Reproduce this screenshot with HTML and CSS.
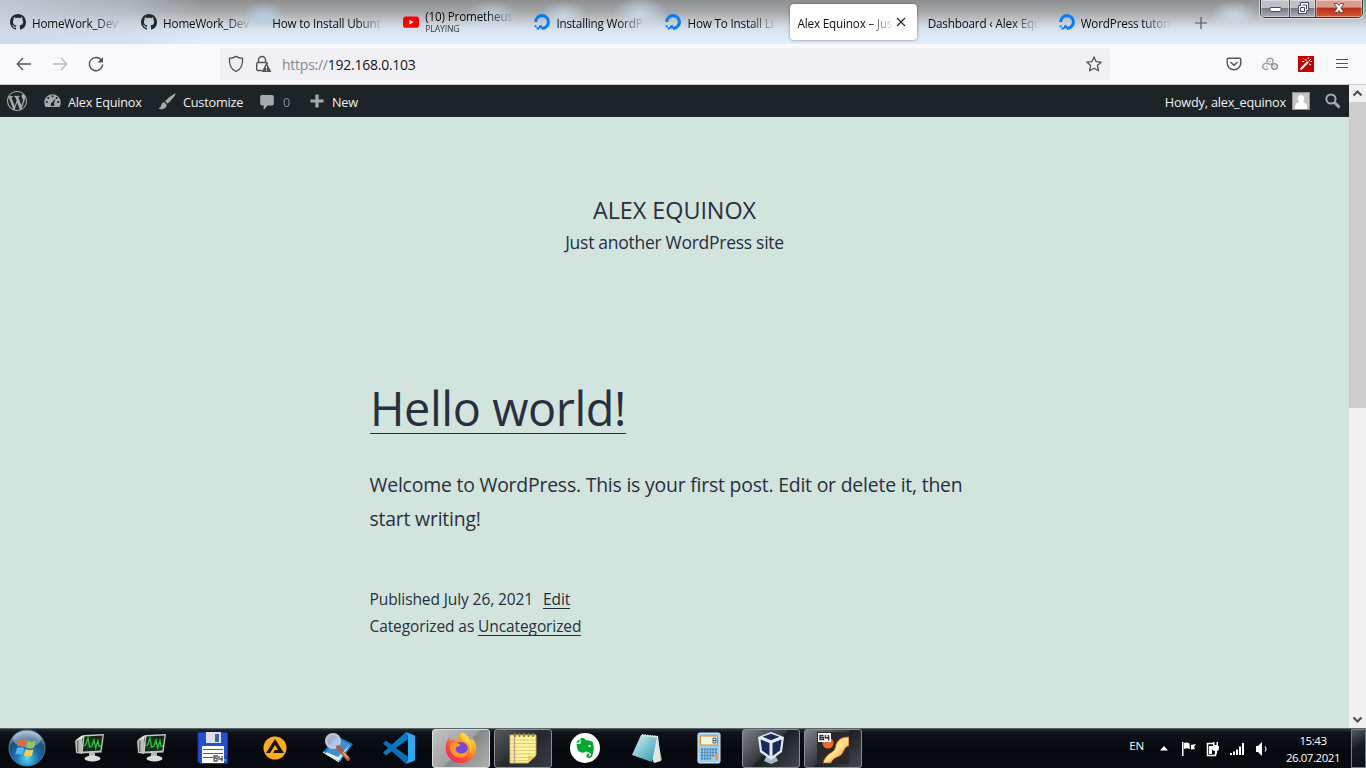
FILE: index.html
```html
<!DOCTYPE html>
<html lang="en">
<head>
<meta charset="utf-8">
<title>Alex Equinox – Just another WordPress site</title>
<link rel="stylesheet" href="styles.css">
</head>
<body>
<svg class="defs" width="0" height="0" aria-hidden="true">
  <defs>
    <symbol id="github" viewBox="0 0 16 16"><path fill="#24292e" fill-rule="evenodd" d="M8 0C3.58 0 0 3.58 0 8c0 3.54 2.29 6.53 5.47 7.59.4.07.55-.17.55-.38 0-.19-.01-.82-.01-1.49-2.01.37-2.53-.49-2.69-.94-.09-.23-.48-.94-.82-1.13-.28-.15-.68-.52-.01-.53.63-.01 1.08.58 1.23.82.72 1.21 1.87.87 2.33.66.07-.52.28-.87.51-1.07-1.78-.2-3.64-.89-3.64-3.95 0-.87.31-1.59.82-2.15-.08-.2-.36-1.02.08-2.12 0 0 .67-.21 2.2.82.64-.18 1.32-.27 2-.27s1.36.09 2 .27c1.53-1.04 2.2-.82 2.2-.82.44 1.1.16 1.92.08 2.12.51.56.82 1.27.82 2.15 0 3.07-1.87 3.75-3.65 3.95.29.25.54.73.54 1.48 0 1.07-.01 1.93-.01 2.2 0 .21.15.46.55.38A8.01 8.01 0 0 0 16 8c0-4.42-3.58-8-8-8z"/></symbol>
    <symbol id="ocean" viewBox="0 0 16 16"><path fill="none" stroke="#0080ff" stroke-width="3.1" d="M1.6 8A6.4 6.4 0 1 1 8 14.4"/><path fill="#0080ff" d="M5 11.2h3.1V16H8v-1.6H5zM2.6 13.2H5v2.4H2.6zM.6 11.2h2v2h-2z"/></symbol>
    <symbol id="monitor" viewBox="0 0 32 32"><path fill="#b9bcb7" d="M2 9l7-4v17l-6-1z"/><path fill="#6f746f" d="M4 9l1.500-1v12L4 20z"/><path fill="#e3e5e0" d="M2 8.500L8 4l3-1-2 4z"/><path fill="#c6c9c3" d="M10 3l21-1-2.500 18.500L8 21.500z"/><path fill="#11251a" d="M11.500 4.500L29.500 3.500 27.300 18.500 9.800 19.500z"/><path fill="none" stroke="#1f5c2e" stroke-width=".5" d="M11 8l18-.6M10.500 12l18-.6M10 16l17.800-.6M15.500 4.500l-1.500 15M20 4l-1.500 15M25 4l-1.500 15"/><path fill="none" stroke="#27c73c" stroke-width="1.300" d="M10.500 14l2-1 2.500-7 1.500 9 2.500-1 2-6 1.500 8 2.500-7 1 5h2"/><path fill="#b3b7b2" d="M16 21h6v5h-6z"/><ellipse cx="19.500" cy="26.500" rx="8" ry="3" fill="#d9dcd9"/></symbol>
    <linearGradient id="flame" x1="1" y1="0" x2=".1" y2="1"><stop offset="0" stop-color="#fff44f"/><stop offset=".35" stop-color="#ffa51f"/><stop offset=".7" stop-color="#ff453c"/><stop offset="1" stop-color="#e91e78"/></linearGradient>
    <radialGradient id="orb" cx=".5" cy=".8" r=".75"><stop offset="0" stop-color="#55d8f5"/><stop offset=".4" stop-color="#1674b4"/><stop offset=".75" stop-color="#1c4a78"/><stop offset="1" stop-color="#8dabc2"/></radialGradient>
    <linearGradient id="pad" x1="0" y1="0" x2="1" y2="1"><stop offset="0" stop-color="#d8f3f5"/><stop offset="1" stop-color="#2c98b0"/></linearGradient>
    <linearGradient id="lava" x1="0" y1="0" x2="1" y2="1"><stop offset="0" stop-color="#ff8b25"/><stop offset=".5" stop-color="#ffe592"/><stop offset="1" stop-color="#ff7418"/></linearGradient>
  </defs>
</svg>

<header class="titlebar">
  <div class="tabs">
    <div class="tab"><svg class="favicon"><use href="#github"/></svg><span class="label">HomeWork_Dev</span></div>
    <div class="tab"><svg class="favicon"><use href="#github"/></svg><span class="label">HomeWork_Dev</span></div>
    <div class="tab"><span class="label">How to Install Ubunt</span></div>
    <div class="tab"><svg class="favicon" viewBox="0 0 16 16"><rect y="2.5" width="16" height="11.2" rx="2.8" fill="#f00"/><path d="M6.4 5.7v4.8l4.2-2.4z" fill="#fff"/></svg><span class="label stacked"><span>(10) Prometheus</span><small>PLAYING</small></span></div>
    <div class="tab"><svg class="favicon"><use href="#ocean"/></svg><span class="label">Installing WordP</span></div>
    <div class="tab"><svg class="favicon"><use href="#ocean"/></svg><span class="label">How To Install Li</span></div>
    <div class="tab active"><span class="label">Alex Equinox – Jus</span><svg class="close" viewBox="0 0 10 10"><path d="M1 1l8 8M9 1L1 9" stroke="#222" stroke-width="1.1"/></svg></div>
    <div class="tab"><span class="label">Dashboard ‹ Alex Equ</span></div>
    <div class="tab"><svg class="favicon"><use href="#ocean"/></svg><span class="label">WordPress tutori</span></div>
    <svg class="newtab" viewBox="0 0 12 12"><path d="M6 0v12M0 6h12" stroke="#55565c" stroke-width="1.2"/></svg>
  </div>
  <div class="winbuttons">
    <span class="winbtn"><svg width="14" height="12" viewBox="0 0 14 12"><rect x="2" y="5.5" width="11" height="4" rx=".5" fill="#fff" stroke="#444a5c"/></svg></span>
    <span class="winbtn mid"><svg width="14" height="12" viewBox="0 0 14 12"><path d="M4.500.500h8v8h-2v3h-8v-8h2z" fill="#fff" stroke="#444a5c"/><path d="M4.500 5.500h4v4h-4zM6.500 3h4v4" fill="none" stroke="#444a5c"/></svg></span>
    <span class="winbtn quit"><svg width="14" height="12" viewBox="0 0 14 12"><path d="M2 1.500h3.300L7 3.600l1.700-2.100H12L8.800 6l3.200 4.500H8.700L7 8.400l-1.700 2.100H2L5.200 6z" fill="#fff" stroke="#5b3038" stroke-width=".8"/></svg></span>
  </div>
</header>

<nav class="toolbar">
  <svg class="nav-icon" viewBox="0 0 16 16"><path d="M15 8H1.500M7 2L1.300 8 7 14" fill="none" stroke="#53535d" stroke-width="1.300"/></svg>
  <svg class="nav-icon forward" viewBox="0 0 16 16"><path d="M1 8h13.500M9 2l5.700 6L9 14" fill="none" stroke="#b9b9be" stroke-width="1.300"/></svg>
  <svg class="nav-icon" viewBox="0 0 16 16"><path d="M13.600 4.600A6.600 6.600 0 1 0 14.600 8.500" fill="none" stroke="#53535d" stroke-width="1.400"/><path d="M15 1v5.500H9.500z" fill="#53535d"/></svg>
  <div class="urlbar">
    <svg width="16" height="18" viewBox="0 0 16 18"><path d="M8 1.400C10 2.800 12.300 3.300 14.600 3.400 14.800 9.500 13 14.500 8 16.400 3 14.500 1.200 9.500 1.400 3.400 3.700 3.300 6 2.800 8 1.400z" fill="none" stroke="#53535d" stroke-width="1.300"/></svg>
    <svg class="lock" width="17" height="18" viewBox="0 0 17 18"><path d="M3.500 7.500V5a3.500 3.500 0 0 1 7 0v2.500M7 15.500H3A1.200 1.200 0 0 1 1.700 14.300V8.700A1.200 1.200 0 0 1 3 7.500h8.500l1.300 1.300" fill="none" stroke="#53535d" stroke-width="1.400"/><path d="M11.500 7.600L16.400 17H6.600z" fill="#53535d"/><path d="M11.500 11v2.700M11.500 14.700v1.100" stroke="#f0f0f4" stroke-width="1.100"/></svg>
    <span class="url"><span class="scheme">https://</span>192.168.0.103</span>
    <svg class="star" width="16" height="16" viewBox="0 0 16 16"><path d="M8 .9l2.100 4.700 5.100.5-3.800 3.500 1.100 5.200L8 12.200l-4.500 2.600 1.100-5.200L.8 6.100l5.100-.5z" fill="none" stroke="#53535d" stroke-width="1.300" stroke-linejoin="round"/></svg>
  </div>
  <div class="extras">
    <svg width="16" height="16" viewBox="0 0 16 16"><path d="M2.500 2.200h11a1.300 1.300 0 0 1 1.300 1.300V7a6.800 6.800 0 0 1-13.600 0V3.500a1.300 1.300 0 0 1 1.300-1.300zM4.500 6L8 9.300 11.500 6" fill="none" stroke="#53535d" stroke-width="1.400"/></svg>
    <svg width="16" height="16" viewBox="0 0 16 16" fill="none" stroke="#a3a3a8" stroke-width="1.500"><circle cx="8" cy="5.200" r="3"/><path d="M6 12.500A3 3 0 1 1 5.500 8"/><circle cx="12.500" cy="10.500" r="2.800" stroke="#8e8e93"/><path d="M4 10.500h1M12.500 10v1M8 5v1M9 8.500l1 1"/></svg>
    <svg width="16" height="16" viewBox="0 0 16 16"><path fill="#c60000" d="M0 0h16v16H0z"/><path d="M2.500 13.500L10 6" stroke="#fff" stroke-width="2.200"/><path d="M10.500 5.500L13 3M8 3V5M5.500 2.500l1 1M4 5.500h2M11 8l2 1M12.500 5.500h1.500M10.500 1.500l-.5 1.500" stroke="#fff" stroke-width="1"/></svg>
    <svg width="12" height="16" viewBox="0 0 12 16"><path d="M0 3.500h12M0 7.500h12M0 11.500h12" stroke="#53535d" stroke-width="1.200"/></svg>
  </div>
</nav>

<div class="viewport">
  <div class="site">
    <div class="adminbar">
      <svg class="ab-wp" viewBox="0 0 20 20"><path fill="#a7aaad" d="M20 10c0-5.510-4.490-10-10-10C4.480 0 0 4.490 0 10c0 5.520 4.480 10 10 10 5.510 0 10-4.480 10-10zM7.780 15.370L4.370 6.220c.55-.02 1.170-.08 1.170-.08.5-.06.44-1.130-.06-1.110 0 0-1.450.11-2.370.11-.18 0-.37 0-.58-.01C4.120 2.690 6.870 1.110 10 1.110c2.330 0 4.450.87 6.050 2.340-.68-.11-1.650.39-1.650 1.580 0 .74.45 1.360.9 2.100.35.61.55 1.360.55 2.460 0 1.490-1.400 5-1.400 5l-3.030-8.370c.54-.02.82-.17.82-.17.5-.05.44-1.250-.06-1.220 0 0-1.440.12-2.380.12-.87 0-2.330-.12-2.330-.12-.5-.03-.56 1.200-.06 1.220l.92.08 1.260 3.410zM17.410 10c.24-.64.74-1.870.43-4.250.7 1.290 1.050 2.710 1.050 4.250 0 3.290-1.730 6.240-4.400 7.780.97-2.590 1.940-5.200 2.920-7.780zM6.100 18.090C3.120 16.650 1.110 13.530 1.110 10c0-1.300.23-2.480.72-3.590C3.250 10.300 4.670 14.200 6.100 18.090zm4.030-6.630l2.580 6.980c-.86.29-1.760.45-2.710.45-.79 0-1.570-.11-2.290-.33.81-2.380 1.620-4.740 2.420-7.100z"/></svg>
      <span class="ab-item ab-site"><svg width="17" height="16" viewBox="0 0 17 16"><path fill="#a7aaad" d="M1.600 14A8.200 8.200 0 1 1 15.400 14z"/><g fill="#1d2327"><circle cx="8.500" cy="3.300" r="1.100"/><circle cx="4.300" cy="5" r="1.100"/><circle cx="2.800" cy="9" r="1.100"/><circle cx="14.200" cy="9" r="1.100"/><circle cx="12.700" cy="5" r="1.100"/><path d="M11.500 5.200l-1.400 5.200a1.800 1.800 0 1 1-2-.8z"/></g></svg><b>Alex Equinox</b></span>
      <span class="ab-item ab-custom"><svg width="18" height="17" viewBox="0 0 18 17"><path fill="#a7aaad" d="M17.500.5C16 .2 9 6 7 8.300l2.500 2.500C12 8.500 18 2.500 17.500.5zM6.200 9.200c-2 0-2.700 1.400-3 3C2.800 14 2 14.500.5 15.500c3 1.500 8 .5 8.200-3.800z"/></svg><b>Customize</b></span>
      <span class="ab-item ab-comments"><svg width="14" height="16" viewBox="0 0 14 16"><path fill="#a7aaad" d="M2 0h10a1.800 1.800 0 0 1 1.800 1.800v7A1.800 1.800 0 0 1 12 10.500H7.500L3.700 15v-4.500H2A1.800 1.800 0 0 1 .2 8.800v-7A1.800 1.800 0 0 1 2 0z"/></svg><b class="dim">0</b></span>
      <span class="ab-item ab-new"><svg width="14" height="14" viewBox="0 0 14 14"><path d="M7 .5v13M.5 7h13" stroke="#a7aaad" stroke-width="3.200"/></svg><b>New</b></span>
      <span class="ab-item ab-user"><b>Howdy, alex_equinox</b><svg width="18" height="18" viewBox="0 0 18 18"><path fill="#8c8f94" d="M0 0h18v18H0z"/><path fill="#c3c3c3" d="M1 1h16v16H1z"/><path fill="#fff" d="M9 3a3.300 3.500 0 0 1 2 6.300c0 1.500 3.700 1.700 4 4.700v3H3v-3c.3-3 4-3.200 4-4.700A3.300 3.500 0 0 1 9 3z"/></svg></span>
      <svg class="ab-search" viewBox="0 0 16 16"><circle cx="6" cy="6" r="4.600" fill="none" stroke="#a7aaad" stroke-width="2"/><path d="M9.500 9.500l5 5" stroke="#a7aaad" stroke-width="2.800"/></svg>
    </div>
    <div class="masthead">
      <h1 class="site-title">ALEX EQUINOX</h1>
      <p class="tagline">Just another WordPress site</p>
    </div>
    <article class="post">
      <h2 class="post-title"><a href="#">Hello world!</a></h2>
      <p class="post-body">Welcome to WordPress. This is your first post. Edit or delete it, then<br>start writing!</p>
      <footer class="post-meta">
        <div><span>Published July 26, 2021</span><a class="edit" href="#">Edit</a></div>
        <div><span>Categorized as </span><a href="#">Uncategorized</a></div>
      </footer>
    </article>
  </div>
  <div class="scrollbar">
    <svg viewBox="0 0 17 17"><path d="M4.500 10.500l4-4 4 4" fill="none" stroke="#505050" stroke-width="2.200"/></svg>
    <div class="thumb"></div>
    <svg viewBox="0 0 17 17"><path d="M4.500 6.500l4 4 4-4" fill="none" stroke="#505050" stroke-width="2.200"/></svg>
  </div>
</div>

<footer class="taskbar">
  <div class="start"><svg width="38" height="38" viewBox="0 0 38 38"><circle cx="19" cy="19" r="18" fill="url(#orb)" stroke="#567993"/><ellipse cx="19" cy="10" rx="14" ry="8" fill="#dce9f3" opacity=".4"/><path fill="#ee6732" d="M11 11c2.500-1.500 5-1.300 7.500.2L16.700 18c-2.600-1.400-4.900-1.500-7.500-.3z"/><path fill="#95c94a" d="M19.800 12c2.600 1.300 5 1.200 8-.4L26 18.500c-2.700 1.400-5.200 1.300-8 0z"/><path fill="#52b7ea" d="M8.900 19.200c2.500-1.300 5-1.200 7.500.3L14.600 26c-2.500-1.400-4.800-1.400-7.400-.2z"/><path fill="#fdce45" d="M17.600 20.200c2.600 1.300 5.200 1.300 8 0l-1.800 6.600c-2.700 1.400-5.200 1.300-8 0z"/></svg></div>
  <div class="task"><svg viewBox="0 0 32 32"><use href="#monitor"/></svg></div>
  <div class="task"><svg viewBox="0 0 32 32"><use href="#monitor"/></svg></div>
  <div class="task"><svg viewBox="0 0 32 32"><path fill="#2450cf" stroke="#15349b" d="M1 .5h29.500v31H3l-2-2z"/><path fill="#dce0e6" d="M9 0h15v11H9z"/><path fill="#4262b8" d="M18 2h4v8h-4z"/><path fill="#fff" d="M5 14h22v17H5z"/><path d="M6 17.500h20M6 21.500h20M6 25.500h10" stroke="#d82732" stroke-width="1.200"/><path fill="none" stroke="#555" stroke-width="1.300" d="M21 24h-4v5h3v-3h-3M22 24v3h4m-1-3v5.500"/><circle cx="28" cy="28" r=".8" fill="#ddd"/></svg></div>
  <div class="task"><svg viewBox="0 0 32 32"><circle cx="16" cy="16" r="11.500" fill="#ffad14"/><path fill="#151515" fill-rule="evenodd" d="M16 7l9 14H14l2-3h3l-3-5-5 8H7z"/></svg></div>
  <div class="task"><svg viewBox="0 0 32 32"><path fill="#1677c4" d="M2 20L16 4l16 8-13 18z"/><path fill="#dff1ff" d="M4 22l13-15 12 6-11 16z"/><path fill="#3d91d1" d="M5 20L17 6l12 7-12 12z"/><path fill="none" stroke="#fff" d="M2 20l16 10"/><circle cx="12" cy="9" r="7" fill="#bfcff8" fill-opacity=".85" stroke="#c7c9d0" stroke-width="2"/><path d="M17 15l10 12" stroke="#b35b36" stroke-width="4" stroke-linecap="round"/><path d="M22 20l5 6" stroke="#ffad80" stroke-width="1.500"/></svg></div>
  <div class="task"><svg viewBox="0 0 32 32"><path fill="#087ac6" d="M23 0L0 20.500l3 3L25 7z"/><path fill="#0b6eb5" d="M3 8.500L0 11.500 23 32l2-7z"/><path fill="#2aaaf2" d="M23 0l9 3.500v25L23 32l2-5V5z"/></svg></div>
  <div class="task open current"><svg viewBox="0 0 32 32"><path fill="url(#flame)" d="M17 .5c4 1 7 4 8 8l2-2c3.500 3 5 8 3.500 13C29 27 23 31 16 31S2.500 26.500 1 19C0 14 1 9 5 5l.5 4L9 6c0 2 1 3 3 3.500C12 5 14 2 17 .5z"/><circle cx="16" cy="17" r="7" fill="#7648d8"/><path fill="#ff9826" d="M5 13c3-3 6-3 9-1 2 1 1 2-1 2.500s-3 2-2 4c2 4 9 4 12-1 0 6-4 9-9 8-6-1-10-6-9-12.500z"/><path fill="#ffd43c" d="M17 .5c4 1 7 5 8 8 2 3 3 8 0 13 1-7-1-10-6-13-3-2-4-5-2-8z"/></svg></div>
  <div class="task open dark"><svg viewBox="0 0 32 32"><path fill="#fff49a" stroke="#c8b457" d="M3 3h26v20l-8 8H3z"/><path d="M3 8h26M3 11.500h26M3 15h26M3 18.500h26M3 22h26M3 25.500h21M3 28.500h19" stroke="#d9cd7b"/><path d="M7.500 3v28" stroke="#df8fa2" stroke-width="1.500"/><path fill="#e6ce54" d="M21 31v-7h8z"/><path d="M8 1v4M12.500 1v4M17 1v4M21.500 1v4M26 1v4" stroke="#8b7b3a" stroke-width="1.700"/></svg></div>
  <div class="task"><svg viewBox="0 0 32 32"><circle cx="16" cy="16" r="15" fill="#fff"/><path fill="#00a82d" d="M11.500 6H14c1 0 2 1 2.500 2 5 .5 7 1 7.600 3 .9 4 .9 8-.5 12-.5 2-1.600 3-3.600 3-3 0-3.500-4-1-4.500l1.500.1v1.700c-1.500 0-1.500 1 0 1 1.500-.3 2-2 1-3-1-1-4-.5-4.500-2.300-1 2-4 2-6 1C8.500 19 8 16 7.500 12H11a1 1 0 0 0 .8-1zM10.500 7v3.600H7z"/><circle cx="20.500" cy="14" r="1.200" fill="#fff"/></svg></div>
  <div class="task"><svg viewBox="0 0 32 32"><path fill="#b58c52" d="M26 4l5 24-7 3z"/><path fill="#dde5e5" d="M11 3l16 1 3 25-7 2z"/><path fill="url(#pad)" d="M10 3l16 2-5 25L1 23z"/><path d="M11 3l16 2" stroke="#f0f1ee" stroke-width="2" stroke-dasharray="1.500 1"/></svg></div>
  <div class="task"><svg viewBox="0 0 32 32"><rect x="5" y="1" width="22" height="30" rx="1.500" fill="#9bcdea" stroke="#dcf1fc"/><path fill="#eff4e8" stroke="#d78a30" d="M7.500 4h17v9h-17z"/><path fill="none" stroke="#43617b" d="M20 6h3v5h-3zM20 8.500h3"/><path d="M8 17.500h16M8 20.500h16M8 23.500h16M8 26.500h10" stroke="#447faf" stroke-width="2" stroke-dasharray="2 .8"/><path fill="#ff981f" d="M22 22h3v6h-3z"/></svg></div>
  <div class="task open"><svg viewBox="0 0 32 32"><path fill="#a7b8ce" d="M12 23h8l3 6-7 3-7-3z"/><path fill="#e1eafa" d="M16 0l13 5-2 15-11 8L5 20 3 5z"/><path fill="#182c58" d="M16 1.800l8.500 3-8.500 3.500-8.500-3.500zM5.500 7.500L14.500 11v13L7 18.500zM26.500 7.500L17.500 11v13l7.500-5.500z"/></svg></div>
  <div class="task open"><svg viewBox="0 0 32 32"><path fill="#29292c" d="M0 0h32v32H0z"/><path fill="url(#lava)" stroke="#b74312" stroke-width=".8" d="M6 31c2-7 6-9 9-11 5-3 2-7 6-11 3-4 7-4 11-4v9c-5 1-4 4-7 8-3 4-8 2-11 9z"/><circle cx="11" cy="11" r="5.500" fill="#ed6b27"/><path fill="#fff" d="M1 1h13v9H1z"/><path fill="none" stroke="#333" stroke-width="1.400" d="M6.500 3.500H3v4h3.500v-2H3M8.500 3v2.700h4M11.500 3v5.500"/></svg></div>
  <div class="tray">
    <span class="lang">EN</span>
    <svg class="up" width="8" height="5" viewBox="0 0 8 5"><path fill="#fff" d="M4 0l4 4.500H0z"/></svg>
    <svg class="flag" width="15" height="15" viewBox="0 0 15 15"><path fill="#fff" d="M0 1h1.500v14H0zM2 2c2-1 4-.5 5.500.5L8 8C6 7 4 7 2 8zM9 4l5-1-2 3 1 2-4 .5z"/></svg>
    <svg class="power" width="14" height="16" viewBox="0 0 14 16"><path fill="none" stroke="#fff" stroke-width="1.500" d="M8 2.500H1.500v12h8V12"/><path fill="#fff" d="M3 5h3v8H3zM7 5V1h1.500v3h2V1H12v4h1v2c0 2-1 3-2 3v3H9v-3C7 10 6 9 6 7V5z"/></svg>
    <svg class="signal" width="15" height="12" viewBox="0 0 15 12"><path fill="#fff" d="M0 10h2v2H0zM3 8.500h2V12H3zM6 6.500h2V12H6zM9 3.500h2V12H9zM12 0h2v12h-2z"/></svg>
    <svg class="sound" width="13" height="14" viewBox="0 0 13 14"><path fill="#fff" d="M0 4h2l4-4v14l-4-4H0z"/><path d="M9 4.500q2 2.500 0 5" fill="none" stroke="#ddd" stroke-width="1.200"/></svg>
    <div class="clock"><span>15:43</span><span>26.07.2021</span></div>
    <div class="peek"></div>
  </div>
</footer>
</body>
</html>
```

FILE: styles.css
```css
* { box-sizing: border-box; margin: 0; padding: 0; }
body {
  width: 1366px; height: 768px; overflow: hidden;
  display: flex; flex-direction: column;
  font-family: "Open Sans", "Noto Sans", sans-serif;
  background: #d1e4dd;
}
svg { display: block; flex: none; }
.defs { position: absolute; }

/* Window title bar with tabs */
.titlebar {
  height: 44px; flex: none; position: relative;
  background:
    radial-gradient(ellipse 22px 14px at 264px 16px, #b4d5edcc, transparent),
    radial-gradient(ellipse 26px 16px at 492px 16px, #c8dff0bb, transparent),
    radial-gradient(ellipse 24px 15px at 564px 16px, #cfe3f2bb, transparent),
    radial-gradient(ellipse 28px 18px at 640px 14px, #cfe3f2cc, transparent),
    radial-gradient(ellipse 24px 14px at 1234px 15px, #cfe3f2cc, transparent),
    linear-gradient(90deg, #c8d6e3cc 0, #c8d6e377 130px, transparent 205px),
    linear-gradient(#8e8f91 0, #a5a6a8 12px, #c1c5ca 20px, #d5e0eb 28px, #dde9f6 36px, #e2edf9 44px);
}
.tabs { display: flex; height: 44px; }
.tab {
  width: 127.100px; height: 36px; margin: 4px 1px 0 3px; padding: 0 4px 0 7px;
  display: flex; align-items: center; border-radius: 4px; flex: none;
}
.tab.active { background: #fff; box-shadow: 0 0 3px #0007; }
.favicon { width: 16px; height: 16px; margin-right: 6px; }
.label {
  flex: 1; min-width: 0; white-space: nowrap; padding-top: 1px; margin-right: 4px;
  font-size: 11.700px; line-height: 16px; letter-spacing: -.17px; color: #0c0c0d;
  -webkit-mask-image: linear-gradient(90deg, #000 calc(100% - 28px), transparent);
  mask-image: linear-gradient(90deg, #000 calc(100% - 28px), transparent);
}
.tab.active .label { margin-right: 1px; padding-left: 1px; }
.stacked { display: flex; flex-direction: column; padding-top: 0; line-height: 14px; }
.stacked small { font-size: 8.700px; line-height: 12px; color: #38383d; }
.close { width: 10px; height: 10px; margin-right: 7px; }
.newtab { width: 12px; height: 12px; margin: 17px 0 0 15px; }
.winbuttons {
  position: absolute; right: 3px; top: -1px; height: 19px; display: flex;
  border: 1px solid #333a44; border-radius: 0 0 5px 5px; overflow: hidden; box-shadow: 0 0 1px 1px #ffffff88;
}
.winbtn {
  width: 28px; display: flex; align-items: center; justify-content: center;
  background: linear-gradient(#bdc0c4 0 45%, #777c83 50%, #a9b0b8); box-shadow: inset 0 0 0 1px #ffffff66;
}
.winbtn svg { margin-top: -2px; }
.winbtn.mid { width: 27px; border: solid #454b55; border-width: 0 1px; }
.winbtn.quit { width: 46px; background: linear-gradient(#dc9b8e 0 40%, #b93118 50%, #d7583a); }

/* Navigation toolbar */
.toolbar {
  height: 41px; flex: none; display: flex; align-items: center;
  padding: 0 17px 1px 16px; background: #f9f9fb; border-bottom: 1px solid #ccccd0;
}
.nav-icon { width: 16px; height: 16px; margin-right: 20px; }
.urlbar {
  width: 890px; height: 32px; margin-left: 96px; padding: 0 8px; border-radius: 4px;
  display: flex; align-items: center; background: #f0f0f4;
}
.lock { margin-left: 11px; }
.url { flex: 1; margin-left: 10px; padding-top: 2px; font-size: 14px; letter-spacing: -.25px; color: #15141a; }
.scheme { color: #87868c; }
.extras { display: flex; align-items: center; margin-left: auto; gap: 20px; margin-right: 1px; }
.extras svg:last-child { margin-left: 2px; }

/* Page area */
.viewport { height: 643px; flex: none; display: flex; }
.site { width: 1349px; height: 643px; color: #28303d; background: #d1e4dd; }
.adminbar { height: 32px; display: flex; align-items: center; padding-left: 7px; background: #1d2327; color: #f0f0f1; }
.adminbar b { font-weight: 400; font-size: 12.700px; line-height: 32px; letter-spacing: -.2px; padding-top: 2px; }
.adminbar b.dim { color: #9ca2a7; opacity: .8; }
.ab-wp { width: 20px; height: 20px; }
.ab-item { display: flex; align-items: center; height: 32px; white-space: nowrap; }
.ab-site { margin-left: 17px; gap: 7px; width: 114px; }
.ab-custom { gap: 7px; width: 102px; }
.ab-comments { gap: 9px; width: 50px; }
.ab-comments svg { margin-top: 3px; }
.ab-new { gap: 8px; }
.ab-user { margin-left: auto; gap: 6px; }
.ab-search { width: 16px; height: 16px; margin: 0 8px 0 15px; }

.masthead { height: 263px; padding-top: 75px; text-align: center; }
.site-title { font-weight: 400; font-size: 23.400px; line-height: 36px; letter-spacing: -.05px; }
.tagline { font-size: 17.500px; line-height: 28px; letter-spacing: -.28px; }
.post { padding-left: 370px; }
.post a { color: inherit; text-decoration: none; border-bottom: 1px solid #28303d; }
.post-title { font-weight: 400; font-size: 46.800px; line-height: 56px; height: 56px; letter-spacing: -.42px; }
.post-title a { display: inline-block; line-height: 52px; height: 52px; }
.post-body { margin-top: 32px; margin-left: -.5px; font-size: 19.400px; line-height: 34px; letter-spacing: -.2px; }
.post-meta { margin-top: 50px; margin-left: -.5px; font-size: 15.500px; line-height: 27px; letter-spacing: -.1px; }
.post-meta div { height: 27px; white-space: pre; }
.post-meta a { display: inline-block; line-height: 18px; height: 19px; }
.edit { margin-left: 10px; }

.scrollbar { width: 17px; height: 643px; display: flex; flex-direction: column; background: #f0f0f0; }
.scrollbar svg { width: 17px; height: 17px; }
.thumb { height: 306px; margin-bottom: auto; background: #cdcdcd; }

/* Taskbar */
.taskbar {
  height: 40px; flex: none; display: flex; align-items: stretch; border-top: 1px solid #59616b;
  background: linear-gradient(#252b36 0, #0e1219 4px, #05080c 60%, #080b10);
}
.start { width: 58px; padding-left: 8px; }
.task { width: 58px; margin: 0 2px; height: 39px; display: flex; align-items: center; justify-content: center; flex: none; }
.task svg { width: 32px; height: 32px; margin-top: -2px; }
.task.open {
  border: 1px solid #8a9097; border-radius: 3px;
  background: linear-gradient(135deg, #7d8287, #34383d 48%, #1b1f24 50%, #43484d);
}
.task.dark { background: linear-gradient(135deg, #565a5e, #25292e 50%, #373a40); }
.task.current { background: linear-gradient(135deg, #c2c3c3, #a0a2a2 50%, #858888 52%, #aeb0b0); border-color: #dedede; }
.tray { margin-left: auto; display: flex; align-items: center; color: #fff; }
.lang { font-size: 11.500px; letter-spacing: -.2px; margin: -6px 16px 0 0; }
.up { margin-right: 14px; }
.flag { margin-right: 9px; }
.power { margin-right: 10px; }
.signal { margin-right: 11px; }
.sound { margin-right: 15px; }
.clock { width: 58px; display: flex; flex-direction: column; align-items: center; font-size: 11.500px; line-height: 17px; letter-spacing: -.45px; }
.peek { width: 15px; height: 39px; margin-left: 9px; border: 1px solid #777d85; background: linear-gradient(150deg, #555a61, #171b21 45%, #0b0e12); }
```
